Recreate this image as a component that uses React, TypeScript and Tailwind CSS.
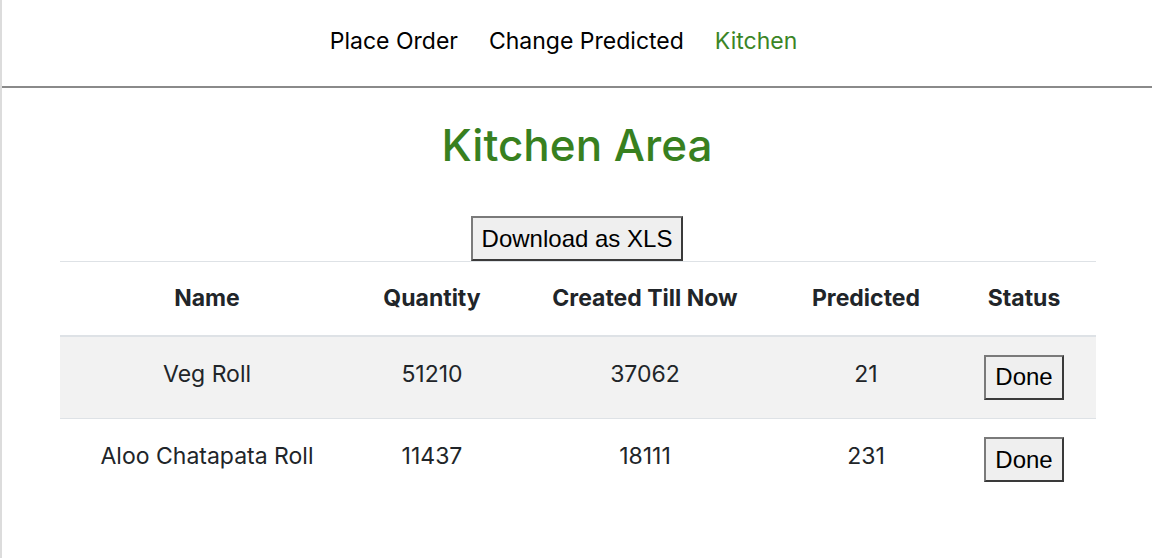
const rows = [
  { name: "Veg Roll", quantity: 51210, created: 37062, predicted: 21 },
  { name: "Aloo Chatapata Roll", quantity: 11437, created: 18111, predicted: 231 },
];

const navLinks = [
  { label: "Place Order", active: false },
  { label: "Change Predicted", active: false },
  { label: "Kitchen", active: true },
];

function RawButton({ children }: { children: React.ReactNode }) {
  return (
    <button
      type="button"
      className="h-[45px] border-2 border-t-[#7a7a7a] border-l-[#7a7a7a] border-r-[#3a3a3a] border-b-[#3a3a3a] bg-[#efefef] px-[9px] font-['Liberation_Sans',Arial,sans-serif] text-[24px] leading-none text-black"
    >
      {children}
    </button>
  );
}

export default function App() {
  return (
    <div className="min-h-[558px] border-l-2 border-[#dcdcdc] bg-white font-['Inter',sans-serif] text-[#212529]">
      <nav className="flex h-[88px] items-center justify-center gap-[31px] border-b-2 border-[#8a8a8a] pr-[27px] pb-[4px] text-[23px] text-black">
        {navLinks.map((link) => (
          <a
            key={link.label}
            href="#"
            className={link.active ? "text-[#3b8526]" : "text-black"}
          >
            {link.label}
          </a>
        ))}
      </nav>

      <h1 className="mt-[35px] text-center text-[44px] font-medium leading-none text-[#38801f]">
        Kitchen Area
      </h1>

      <div className="mt-[49px] flex justify-center">
        <RawButton>Download as XLS</RawButton>
      </div>

      <div className="px-[58px]">
        <table className="w-full table-fixed border-collapse text-center text-[23px]">
          <colgroup>
            <col className="w-[294px]" />
            <col className="w-[156px]" />
            <col className="w-[270px]" />
            <col className="w-[172px]" />
            <col className="w-[144px]" />
          </colgroup>
          <thead>
            <tr className="h-[74px] border-t border-b-2 border-[#dee2e6]">
              {["Name", "Quantity", "Created Till Now", "Predicted", "Status"].map((h) => (
                <th key={h} className="font-bold">
                  {h}
                </th>
              ))}
            </tr>
          </thead>
          <tbody>
            {rows.map((row, i) => (
              <tr
                key={row.name}
                className={
                  i === 0
                    ? "h-[83px] border-b border-[#dee2e6] bg-[#f2f2f2]"
                    : "h-[83px] bg-white"
                }
              >
                <td className="pt-[20px] align-top">{row.name}</td>
                <td className="pt-[20px] align-top">{row.quantity}</td>
                <td className="pt-[20px] align-top">{row.created}</td>
                <td className="pt-[20px] align-top">{row.predicted}</td>
                <td className="pt-[18px] align-top">
                  <RawButton>Done</RawButton>
                </td>
              </tr>
            ))}
          </tbody>
        </table>
      </div>
    </div>
  );
}
